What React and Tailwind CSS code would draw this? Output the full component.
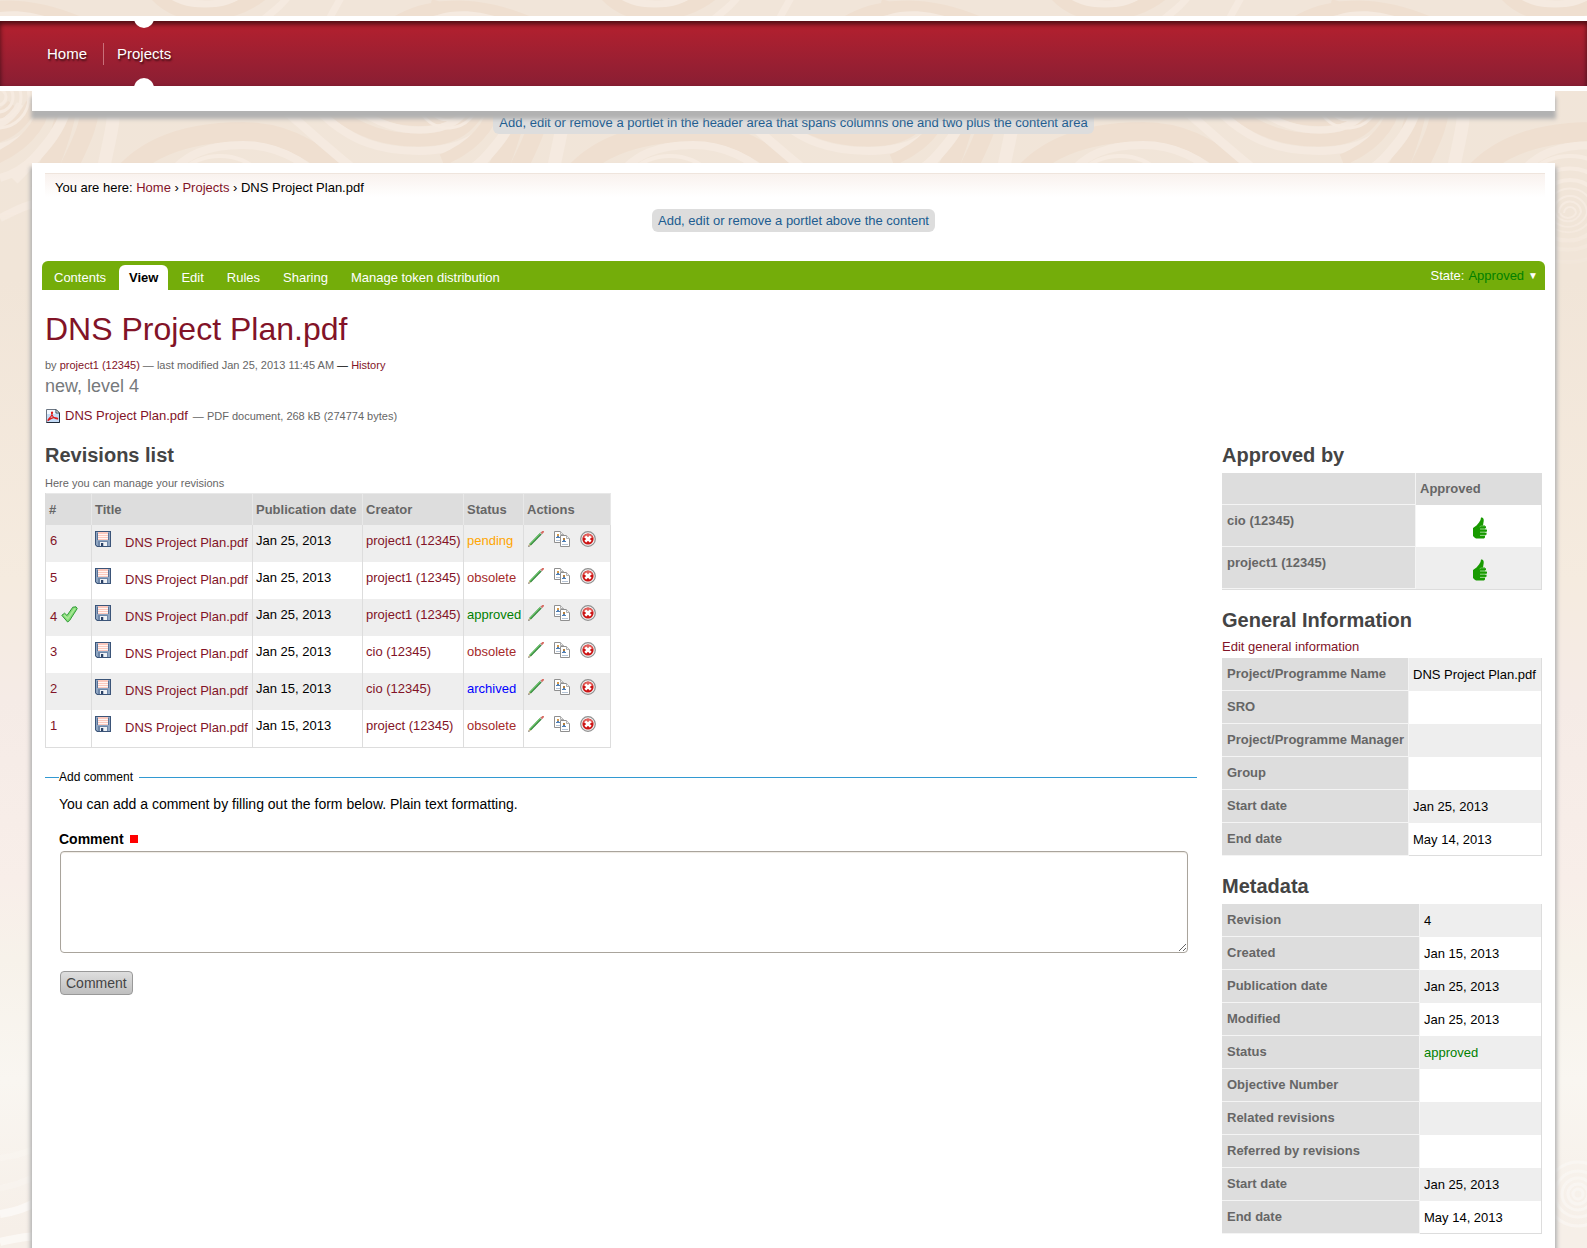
import React from "react";

const LINK = "text-[#821327] hover:underline";

function Backdrop() {
  const rings = [6, 11, 17, 24, 33, 44, 57];
  return (
    <svg className="absolute inset-0 h-full w-full" aria-hidden="true">
      <defs>
        <g id="tile" fill="none">
          <g stroke="#efdfd0">
            <path strokeWidth="14" d="M-20 6C20 18 60 18 90 30M150 -14C165 10 190 14 205 14S250 8 270 -14M395 24C430 2 480 2 530 24" />
            <path strokeWidth="20" d="M112 190C140 145 190 132 243 132S320 160 372 190" />
            <path strokeWidth="13" d="M330 108C360 134 390 140 419 140S468 132 482 104" />
            <path strokeWidth="10" d="M365 104C385 118 400 121 419 121S450 118 462 104" />
            <path strokeWidth="18" d="M92 88C92 130 76 150 58 190" />
            <path strokeWidth="12" d="M48 88C46 122 26 146 -8 160" />
            <path strokeWidth="20" d="M520 88C516 125 505 150 490 190" />
          </g>
          <g stroke="#f5eae0">
            <path strokeWidth="7" d="M-20 22C0 12 30 10 70 30M160 -14C175 2 190 4 205 4S235 2 250 -14M345 -10C338 4 332 12 326 26M255 26C270 14 285 4 292 -10M400 34C430 12 480 12 515 34" />
            <path strokeWidth="8" d="M160 190C180 150 215 145 243 145S300 155 335 190" />
            <path strokeWidth="9" d="M278 104C306 128 330 152 380 190" />
            <path strokeWidth="8" d="M312 104C350 145 385 151 419 151S490 140 500 100" />
            <path strokeWidth="7" d="M350 104C380 126 400 130 419 130S458 126 470 104" />
            <path strokeWidth="13" d="M114 88C116 130 106 145 100 190" />
            <path strokeWidth="10" d="M70 88C68 125 46 148 14 180" />
            <path strokeWidth="8" d="M0 218C14 212 24 205 34 204M0 178C14 174 26 166 34 158" />
          </g>
          <g stroke="#f6ebe1" strokeWidth="3">
            {[8, 15, 23, 31].map((r) => (
              <circle key={r} cx="-2" cy="97" r={r} />
            ))}
            {rings.map((r, i) => (
              <path
                key={r}
                d={`M${220 - r} 213A${r} ${r} 0 0 1 ${220 + r} ${213 - (i % 2)}A${r + 3} ${r + 3} 0 0 1 ${216 - r} 213`}
                strokeWidth={i > 3 ? 4 : 2}
              />
            ))}
          </g>
        </g>
        <pattern id="swirls" width="450" height="280" patternUnits="userSpaceOnUse">
          <use href="#tile" x="-450" />
          <use href="#tile" />
          <use href="#tile" x="450" />
        </pattern>
        <linearGradient id="fade" x1="0" y1="0" x2="0" y2="1">
          <stop offset="0.75" stopColor="#fff" />
          <stop offset="1" stopColor="#000" />
        </linearGradient>
        <mask id="fadeMask" maskUnits="userSpaceOnUse" x="0" y="0" width="4000" height="280">
          <rect width="4000" height="280" fill="url(#fade)" />
        </mask>
        <pattern id="lowerSwirls" width="450" height="140" y="1120" patternUnits="userSpaceOnUse">
          <g fill="none" stroke="#fcfaf7">
            <path strokeWidth="6" d="M0 68C14 66 28 60 36 56M0 38C14 36 28 32 36 28" opacity=".3" />
            <path strokeWidth="8" d="M0 94C14 92 26 88 36 82M0 122C14 118 26 117 36 116" opacity=".8" />
            {[5, 10, 16, 23, 32].map((r) => (
              <circle key={r} cx="228" cy="74" r={r} strokeWidth="3" opacity=".5" />
            ))}
          </g>
        </pattern>
      </defs>
      <rect width="100%" height="280" fill="url(#swirls)" mask="url(#fadeMask)" />
      <rect y="1120" width="100%" height="140" fill="url(#lowerSwirls)" />
    </svg>
  );
}

function FloppyIcon() {
  return (
    <svg width="16" height="16" viewBox="0 0 16 16" className="block shrink-0" aria-hidden="true">
      <path d="M0 0h16v16H2l-2-2z" fill="#3b5478" />
      <path d="M1 1h14v14H2.500L1 13.500z" fill="#8fa6c2" />
      <path d="M2 2h1v7H2zM13 2h1v7h-1z" fill="#5a7499" />
      <path d="M3 1h10v8H3z" fill="#fff6f3" />
      <path d="M3 1h10v2H3zM3 4h10v1H3zM3 6h10v1H3zM3 8h10v1H3z" fill="#fbc8bd" />
      <path d="M3 10h10v5H3z" fill="#6f87a8" />
      <path d="M5 11h7v4H5z" fill="#eef1f5" />
      <path d="M6 12h2v3H6z" fill="#2b4267" />
      <path d="M8 12h1v3H8z" fill="#b9c3d2" />
    </svg>
  );
}

function PencilIcon() {
  return (
    <svg width="16" height="16" viewBox="0 0 16 16" className="block" aria-hidden="true">
      <path d="M1.800 14L13.500 2" stroke="#2f7d36" strokeWidth="2.400" />
      <path d="M1.800 13.400L13.200 1.700" stroke="#6ccb6a" strokeWidth="1.100" />
      <path d="M12.600 2.900L13.800 1.700" stroke="#c9ccd0" strokeWidth="2.400" />
      <path d="M14 1.700L15 .700" stroke="#d86a62" strokeWidth="2" strokeLinecap="round" />
      <path d="M.400 15.600L1 13L3 14.800z" fill="#e9cf9c" />
      <path d="M.300 15.700L.800 14.200L1.800 15.200z" fill="#222" />
    </svg>
  );
}

function CopyIcon() {
  return (
    <svg width="16" height="16" viewBox="0 0 16 16" className="block" aria-hidden="true">
      <path d="M.500 .500h6l3 3v8h-9z" fill="#fff" stroke="#8f8f8f" />
      <path d="M6.500 .500v3h3" fill="#eee" stroke="#b0b0b0" />
      <path d="M3 3h2v2H3z" fill="#d59a4a" />
      <path d="M2 6h4v1H2zM3 5h2v1H3z" fill="#4f7fb5" />
      <path d="M2 9.500h4" stroke="#b5c4d6" />
      <path d="M6.500 4.500h6l3 3v8h-9z" fill="#fff" stroke="#8f8f8f" />
      <path d="M12.500 4.500v3h3" fill="#eee" stroke="#b0b0b0" />
      <path d="M9 7h2v2H9z" fill="#b5803f" />
      <path d="M8 10h4v1H8zM9 9h2v1H9z" fill="#4f7fb5" />
      <path d="M8 13.500h6" stroke="#b5c4d6" />
    </svg>
  );
}

function DeleteIcon() {
  return (
    <svg width="16" height="16" viewBox="0 0 16 16" className="block" aria-hidden="true">
      <circle cx="8" cy="8" r="7.300" fill="#f2f2f2" stroke="#909090" strokeWidth="1.200" />
      <circle cx="8" cy="8" r="5.600" fill="#cc1414" />
      <path d="M3 6.500a5.200 5.200 0 0 1 10 0c-3 1.400-7 1.400-10 0z" fill="#e2605c" />
      <path d="M5.300 5.300l5.400 5.400M10.700 5.300l-5.400 5.400" stroke="#fff" strokeWidth="2.600" />
    </svg>
  );
}

function CheckIcon() {
  return (
    <svg width="17" height="17" viewBox="0 0 17 17" className="block" aria-hidden="true">
      <path
        d="M.800 9.300L3.600 7.200L6 9.500L11.800 1.200L15 .800L16.200 2.600L8.600 14.500L6.600 16z"
        fill="#86dc77"
        stroke="#2f9a35"
        strokeLinejoin="round"
      />
      <path d="M3.200 9L6.700 12.600L14 2.400" stroke="#a9e898" strokeWidth="1.600" fill="none" />
    </svg>
  );
}

function PdfIcon() {
  return (
    <svg width="14" height="14" viewBox="0 0 14 14" className="block" aria-hidden="true">
      <path d="M.500 .500h9.500l3.500 3.500v9.500h-13z" fill="#c5dcf7" stroke="#6b7683" />
      <path d="M1 1h8v4H1z" fill="#f3f8fe" />
      <path d="M13.500 4v9.500H.500" fill="none" stroke="#1e2b3a" />
      <path d="M10 .500v3.500h3.500z" fill="#fff" stroke="#44505e" />
      <path
        d="M2 11.500C1.500 9.800 5.500 9 6.500 3.800C6.800 2.500 5 2.800 5.600 4.600C6.500 7.500 9 9.900 11.300 10C12.600 9.700 10 8.300 7.500 8.600C5 9 3.500 10.200 2 11.500z"
        fill="none"
        stroke="#e01b1b"
        strokeWidth="1.200"
      />
    </svg>
  );
}

function ThumbIcon() {
  return (
    <svg width="14" height="22" viewBox="0 0 14 22" className="block" role="img" aria-label="Approved">
      <path
        d="M8 .500C9.800 0 11 1.500 10.700 4L10 8.500H12V20.500L11 21.500H3L1.500 20.500L0 19V11L3.500 8.500L6 5.500L7.500 3z"
        fill="#189a00"
      />
      <rect x="7" y="9" width="6" height="2.600" rx="1" fill="#189a00" />
      <rect x="7" y="12.300" width="7" height="2.600" rx="1" fill="#189a00" />
      <rect x="7" y="15.500" width="6.600" height="2.600" rx="1" fill="#189a00" />
      <path d="M7 12H14M7 15.200H14M7 18.400H13" stroke="#b9e4b0" strokeWidth=".8" />
      <path d="M6.800 10.200Q7 9 8.500 8.900H12" stroke="#8ad07c" strokeWidth=".7" fill="none" />
    </svg>
  );
}

const revisions = [
  { n: 6, date: "Jan 25, 2013", by: "project1 (12345)", status: "pending", color: "text-[#ffa500]" },
  { n: 5, date: "Jan 25, 2013", by: "project1 (12345)", status: "obsolete", color: "text-[#a52a2a]" },
  { n: 4, date: "Jan 25, 2013", by: "project1 (12345)", status: "approved", color: "text-[#008000]", current: true },
  { n: 3, date: "Jan 25, 2013", by: "cio (12345)", status: "obsolete", color: "text-[#a52a2a]" },
  { n: 2, date: "Jan 15, 2013", by: "cio (12345)", status: "archived", color: "text-[#0000ff]" },
  { n: 1, date: "Jan 15, 2013", by: "project (12345)", status: "obsolete", color: "text-[#a52a2a]" },
];

const columns = [
  ["#", "w-[46px]"],
  ["Title", "w-[161px]"],
  ["Publication date", "w-[110px]"],
  ["Creator", "w-[101px]"],
  ["Status", "w-[60px]"],
  ["Actions", "w-[87px]"],
];

const general = [
  ["Project/Programme Name", "DNS Project Plan.pdf"],
  ["SRO", ""],
  ["Project/Programme Manager", ""],
  ["Group", ""],
  ["Start date", "Jan 25, 2013"],
  ["End date", "May 14, 2013"],
];

const metadata = [
  ["Revision", "4"],
  ["Created", "Jan 15, 2013"],
  ["Publication date", "Jan 25, 2013"],
  ["Modified", "Jan 25, 2013"],
  ["Status", "approved"],
  ["Objective Number", ""],
  ["Related revisions", ""],
  ["Referred by revisions", ""],
  ["Start date", "Jan 25, 2013"],
  ["End date", "May 14, 2013"],
];

function Heading({ children, className = "" }) {
  return <h2 className={`text-xl leading-7 font-bold text-[#444] ${className}`}>{children}</h2>;
}

function RevisionsTable() {
  const cell = "border-r border-[#ddd] px-[3px] pt-[7px] align-top";
  return (
    <table className="mt-[2px] w-[566px] table-fixed border-separate border-spacing-0 border-b border-l border-[#ddd]">
      <thead>
        <tr className="h-8 bg-[#ddd] text-left text-[#666]">
          {columns.map(([name, width]) => (
            <th key={name} scope="col" className={`${width} border-t border-r border-[#e8e8e8] px-[3px] font-bold whitespace-nowrap`}>
              {name}
            </th>
          ))}
        </tr>
      </thead>
      <tbody>
        {revisions.map((r) => (
          <tr key={r.n} className="h-[37px] whitespace-nowrap odd:bg-[#eee] even:bg-white">
            <td className={cell}>
              <div className="flex gap-1 pl-px">
                <a href="#" className={r.current ? `${LINK} mt-[2px]` : LINK}>{r.n}</a>
                {r.current && <CheckIcon />}
              </div>
            </td>
            <td className="border-r border-[#ddd] px-[3px] pt-[6px] align-top">
              <div className="flex items-start gap-[14px]">
                <a href="#" aria-label="Download"><FloppyIcon /></a>
                <a href="#" className={`mt-1 leading-4 ${LINK}`}>DNS Project Plan.pdf</a>
              </div>
            </td>
            <td className={cell}>{r.date}</td>
            <td className={cell}><a href="#" className={LINK}>{r.by}</a></td>
            <td className={`${cell} ${r.color}`}>{r.status}</td>
            <td className="border-r border-[#ddd] px-1 pt-[6px] align-top">
              <div className="flex gap-[10px]">
                <a href="#" aria-label="Edit"><PencilIcon /></a>
                <a href="#" aria-label="Copy"><CopyIcon /></a>
                <a href="#" aria-label="Delete"><DeleteIcon /></a>
              </div>
            </td>
          </tr>
        ))}
      </tbody>
    </table>
  );
}

function InfoTable({ rows, labelWidth, className }) {
  return (
    <table className={`w-full table-fixed border-separate border-spacing-0 border-r border-[#ddd] shadow-[inset_0_-1px_0_#ddd] ${className}`}>
      <tbody>
        {rows.map(([label, value]) => (
          <tr key={label} className="h-[33px] whitespace-nowrap odd:bg-[#eee] last:bg-transparent even:not-last:bg-white">
            <th scope="row" className={`${labelWidth} border-r border-b border-[#f4f4f4] bg-[#ddd] px-[5px] text-left font-bold text-[#666]`}>
              {label}
            </th>
            <td className={value === "approved" ? "px-1 text-[#008000]" : "px-1"}>{value}</td>
          </tr>
        ))}
      </tbody>
    </table>
  );
}

function ApprovedTable() {
  const label = "border-r border-b border-[#f4f4f4] bg-[#ddd] px-[5px] text-left text-[#666]";
  return (
    <table className="mt-1 w-full table-fixed border-separate border-spacing-0 border-r border-b border-[#ddd]">
      <thead>
        <tr className="h-8">
          <td className={`w-[194px] ${label}`} />
          <th scope="col" className="bg-[#ddd] px-1 text-left text-[#666]">Approved</th>
        </tr>
      </thead>
      <tbody>
        {["cio (12345)", "project1 (12345)"].map((name) => (
          <tr key={name} className="h-[42px] odd:bg-white even:bg-[#eee]">
            <th scope="row" className={`pt-[7px] align-top ${label}`}>{name}</th>
            <td className="pl-[2px] align-middle">
              <div className="flex justify-center pt-[3px]"><ThumbIcon /></div>
            </td>
          </tr>
        ))}
      </tbody>
    </table>
  );
}

const PILL = "rounded-md bg-[#ddd] px-[6px] pt-[3px] pb-[2px] text-[#205c90]";
const PANEL = "bg-white shadow-[0_6px_4px_2px_#b2b2b2]";

export default function App() {
  const tabs = ["Contents", "View", "Edit", "Rules", "Sharing", "Manage token distribution"];
  return (
    <div className="relative isolate flex min-h-screen flex-col bg-[linear-gradient(#f1e5d9_0px,#f1e5d8_280px,#f5ebdf_580px,#f5ebe6_700px,#f8eee9_880px,#f7f2ea_960px,#f9f6f1_1080px,#f6efe8_1230px)] font-['Liberation_Sans',Arial,sans-serif] text-[13px] leading-[18px] text-black">
      <Backdrop />

      <div className="relative z-20 mt-4 border-y-[5px] border-white bg-linear-to-b from-[#b5202e] to-[#8a1e33]">
        <nav className="flex h-[65px] items-center overflow-hidden pl-[47px] text-[15px] text-white shadow-[inset_0_3px_5px_rgba(0,0,0,0.6)] [text-shadow:1px_2px_2px_rgba(0,0,0,0.6)]">
          <a href="#">Home</a>
          <span className="mr-[13px] ml-4 h-[22px] w-px bg-[#c9707a]" />
          <a href="#" className="relative flex h-full items-center">
            Projects
            <span className="absolute -top-[13px] left-1/2 size-5 -translate-x-1/2 rounded-full bg-white" />
            <span className="absolute -bottom-3 left-1/2 size-5 -translate-x-1/2 rounded-full bg-white" />
          </a>
        </nav>
      </div>

      <div className="relative z-10 mx-8 h-5 bg-white shadow-[0_7px_4px_1px_#b2b2b2]" />
      <div className="relative flex justify-center">
        <a href="#" className={PILL}>
          Add, edit or remove a portlet in the header area that spans columns one and two plus the content area
        </a>
      </div>

      <main className={`relative mx-8 mt-[29px] flex-1 px-[10px] pt-[10px] pb-[14px] ${PANEL}`}>
        <div className="ml-[3px] border-t border-[#efe5dd] bg-linear-to-b from-[#f9f2ee] to-white px-[10px] pt-[5px]">
          You are here: <a href="#" className={LINK}>Home</a> › <a href="#" className={LINK}>Projects</a> › DNS Project Plan.pdf
        </div>
        <div className="mt-3 flex justify-center">
          <a href="#" className={PILL}>Add, edit or remove a portlet above the content</a>
        </div>

        <div className="mt-[29px] flex h-[29px] items-end justify-between rounded-t-md bg-[#74ad0a] pr-[7px] pl-[2px] text-white">
          <nav className="flex gap-[3px]">
            {tabs.map((t) => (
              <a
                key={t}
                href="#"
                className={
                  t === "View"
                    ? "h-[25px] rounded-t-md bg-white px-[10px] pt-1 font-bold text-black"
                    : "h-[25px] px-[10px] pt-1"
                }
              >
                {t}
              </a>
            ))}
          </nav>
          <button type="button" className="flex gap-1 self-start pt-[6px]">
            <span>State:</span>
            <span className="text-[#008000]">Approved</span>
            <span className="text-[10px]">▼</span>
          </button>
        </div>

        <div className="px-[3px]">
          <h1 className="mt-[19px] text-[32px] leading-10 text-[#821327]">DNS Project Plan.pdf</h1>
          <p className="mt-2 text-[11px] leading-4 text-[#666]">
            by <a href="#" className={LINK}>project1 (12345)</a> — last modified Jan 25, 2013 11:45 AM{" "}
            <span className="text-black">—</span> <a href="#" className={LINK}>History</a>
          </p>
          <p className="mt-px text-lg leading-6 text-[#76797c]">new, level 4</p>
          <p className="mt-[9px] flex items-center gap-[5px] pl-px">
            <PdfIcon />
            <a href="#" className={LINK}>DNS Project Plan.pdf</a>
            <span className="text-[11px] text-[#666]">— PDF document, 268 kB (274774 bytes)</span>
          </p>

          <div className="mt-4 flex gap-[25px]">
            <section className="min-w-0 flex-1">
              <Heading>Revisions list</Heading>
              <p className="mt-[6px] text-[11px] leading-4 text-[#666]">Here you can manage your revisions</p>
              <RevisionsTable />

              <form onSubmit={(e) => e.preventDefault()}>
                <fieldset className="mt-[21px] border-t border-[#3299d2] pr-[10px] pl-[14px]">
                  <legend className="pr-[6px] text-xs leading-4">Add comment</legend>
                  <p className="mt-[9px] text-sm">
                    You can add a comment by filling out the form below. Plain text formatting.
                  </p>
                  <label htmlFor="comment" className="mt-[15px] flex items-center gap-[6px] text-sm font-bold">
                    Comment
                    <span className="size-2 bg-[#ff0000]" title="Required" />
                  </label>
                  <textarea
                    id="comment"
                    className="mt-[2px] ml-px block h-[102px] w-full resize rounded border border-[#a9a49c] bg-white p-1 text-sm shadow-[inset_0_1px_1px_#eeeae4]"
                  />
                  <button
                    type="submit"
                    className="mt-[18px] ml-px h-6 rounded border border-[#999] bg-linear-to-b from-[#dedede] to-[#bfbfbf] px-[5px] text-sm text-[#444]"
                  >
                    Comment
                  </button>
                </fieldset>
              </form>
            </section>

            <aside className="w-80 shrink-0">
              <Heading>Approved by</Heading>
              <ApprovedTable />
              <Heading className="mt-4">General Information</Heading>
              <a href="#" className={`mt-1 block ${LINK}`}>Edit general information</a>
              <InfoTable rows={general} labelWidth="w-[187px]" className="mt-[2px]" />
              <Heading className="mt-4">Metadata</Heading>
              <InfoTable rows={metadata} labelWidth="w-[198px]" className="mt-1" />
            </aside>
          </div>
        </div>
      </main>
    </div>
  );
}
